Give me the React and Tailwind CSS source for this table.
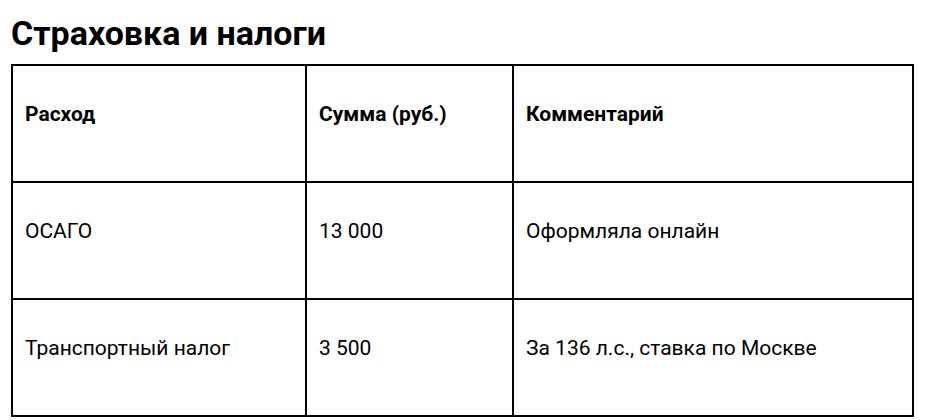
export default function App() {
  const rows = [
    ["ОСАГО", "13 000", "Оформляла онлайн"],
    ["Транспортный налог", "3 500", "За 136 л.с., ставка по Москве"],
  ];
  const td = "border-2 border-black pl-[12px] pr-[12px] pt-[37px] pb-[55px] align-top text-left";
  return (
    <div className="min-h-[420px] w-[934px] bg-white px-[11px] pt-[13px] text-black" style={{ fontFamily: "Roboto, 'Noto Sans', sans-serif" }}>
      <h2 className="text-[34px] font-bold leading-[40px] mb-[11px]">Страховка и налоги</h2>
      <table className="table-fixed border-collapse border-2 border-black w-[903px] text-[21px] leading-[23px]">
        <colgroup>
          <col className="w-[294px]" />
          <col className="w-[207px]" />
          <col />
        </colgroup>
        <thead>
          <tr>
            <th className={td + " font-bold"}>Расход</th>
            <th className={td + " font-bold"}>Сумма (руб.)</th>
            <th className={td + " font-bold"}>Комментарий</th>
          </tr>
        </thead>
        <tbody>
          {rows.map((r, i) => (
            <tr key={i}>
              {r.map((c, j) => (
                <td key={j} className={td + " font-normal"}>{c}</td>
              ))}
            </tr>
          ))}
        </tbody>
      </table>
    </div>
  );
}
